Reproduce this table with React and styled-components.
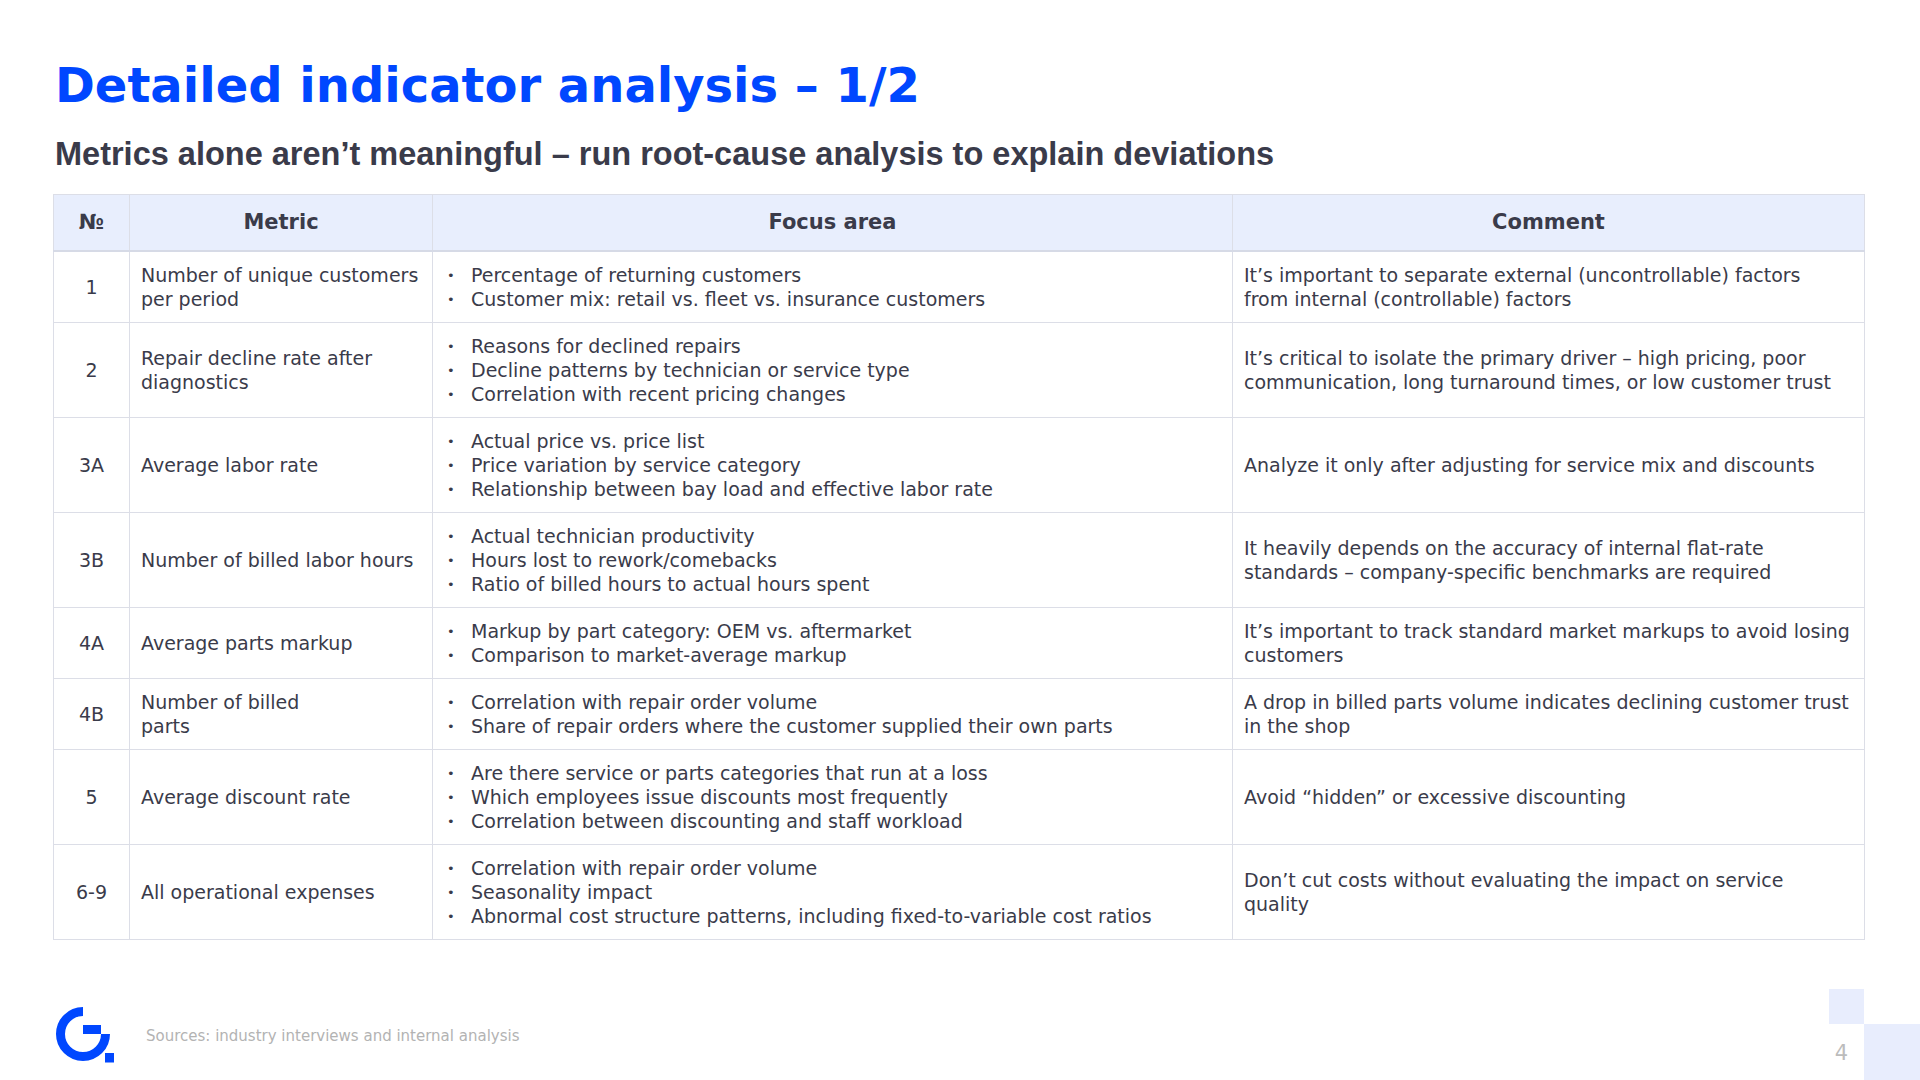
import React from 'react'
import styled, { createGlobalStyle } from 'styled-components'

const GlobalStyle = createGlobalStyle`
  html, body {
    margin: 0;
    padding: 0;
    background: #ffffff;
  }
  body {
    font-family: "DejaVu Sans", "Liberation Sans", sans-serif;
    color: #3a3b4a;
  }
`

const Page = styled.div`
  position: relative;
  width: 1920px;
  height: 1080px;
  box-sizing: border-box;
  padding: 61px 56px 17px 53px;
  display: flex;
  flex-direction: column;
  overflow: hidden;
  background: #ffffff;
`

const Title = styled.h1`
  margin: 0 0 29px 2px;
  font-family: "DejaVu Sans", sans-serif;
  font-weight: 700;
  font-size: 48px;
  line-height: 1;
  color: #0047ff;
`

const Subtitle = styled.h2`
  margin: 0 0 23px 2px;
  font-family: "Liberation Sans", Arial, sans-serif;
  font-weight: 700;
  font-size: 32.5px;
  line-height: 1;
  color: #3a3b4a;
`

const Table = styled.table`
  width: 1811px;
  border-collapse: collapse;
  table-layout: fixed;
  font-size: 19px;
  line-height: 24px;
`

const HeadCell = styled.th`
  background: #e8eefd;
  border: 1px solid #dcdee7;
  border-bottom: 2px solid #d6dae6;
  padding: 15px 10px 16px;
  font-weight: 700;
  font-size: 21px;
  line-height: 24px;
  color: #3a3b4a;
  text-align: center;
`

const Cell = styled.td`
  border: 1px solid #dcdee7;
  padding: 11px ${p => (p.$center ? '4px' : '8px')} 11px ${p => (p.$center ? 4 : p.$indent || 11)}px;
  vertical-align: middle;
  text-align: ${p => (p.$center ? 'center' : 'left')};
  white-space: pre;
  color: #3a3b4a;
`

const BulletList = styled.ul`
  margin: 0;
  padding: 0;
  list-style: none;
`

const BulletItem = styled.li`
  height: 24px;
  line-height: 24px;
  white-space: nowrap;
`

const Dot = styled.span`
  display: inline-block;
  width: 24px;
  font-size: 13px;
  line-height: 0;
  vertical-align: 2px;
  color: #3a3b4a;
`

const Footer = styled.footer`
  margin-top: auto;
  display: flex;
  align-items: center;
  gap: 31px;
  padding-left: 2px;
`

const Sources = styled.span`
  font-size: 15px;
  color: #b3b3b3;
  padding-top: 2px;
`

const Corner = styled.div`
  position: absolute;
  background: #e8edfd;
  right: ${p => p.$right}px;
  bottom: ${p => p.$bottom}px;
  width: ${p => p.$size}px;
  height: ${p => p.$size}px;
`

const PageNumber = styled.span`
  position: absolute;
  right: 72px;
  bottom: 16px;
  font-size: 21px;
  line-height: 21px;
  color: #bcbcbc;
`

const rows = [
  {
    no: '1',
    metric: 'Number of unique customers\nper period',
    focus: ['Percentage of returning customers', 'Customer mix: retail vs. fleet vs. insurance customers'],
    comment: 'It’s important to separate external (uncontrollable) factors\nfrom internal (controllable) factors',
  },
  {
    no: '2',
    metric: 'Repair decline rate after\ndiagnostics',
    focus: ['Reasons for declined repairs', 'Decline patterns by technician or service type', 'Correlation with recent pricing changes'],
    comment: 'It’s critical to isolate the primary driver – high pricing, poor\ncommunication, long turnaround times, or low customer trust',
  },
  {
    no: '3A',
    metric: 'Average labor rate',
    focus: ['Actual price vs. price list', 'Price variation by service category', 'Relationship between bay load and effective labor rate'],
    comment: 'Analyze it only after adjusting for service mix and discounts',
  },
  {
    no: '3B',
    metric: 'Number of billed labor hours',
    focus: ['Actual technician productivity', 'Hours lost to rework/comebacks', 'Ratio of billed hours to actual hours spent'],
    comment: 'It heavily depends on the accuracy of internal flat-rate\nstandards – company-specific benchmarks are required',
  },
  {
    no: '4A',
    metric: 'Average parts markup',
    focus: ['Markup by part category: OEM vs. aftermarket', 'Comparison to market-average markup'],
    comment: 'It’s important to track standard market markups to avoid losing\ncustomers',
  },
  {
    no: '4B',
    metric: 'Number of billed\nparts',
    focus: ['Correlation with repair order volume', 'Share of repair orders where the customer supplied their own parts'],
    comment: 'A drop in billed parts volume indicates declining customer trust\nin the shop',
  },
  {
    no: '5',
    metric: 'Average discount rate',
    focus: ['Are there service or parts categories that run at a loss', 'Which employees issue discounts most frequently', 'Correlation between discounting and staff workload'],
    comment: 'Avoid “hidden” or excessive discounting',
  },
  {
    no: '6-9',
    metric: 'All operational expenses',
    focus: ['Correlation with repair order volume', 'Seasonality impact', 'Abnormal cost structure patterns, including fixed-to-variable cost ratios'],
    comment: 'Don’t cut costs without evaluating the impact on service\nquality',
  },
]

const Logo = () => (
  <svg width="60" height="57" viewBox="0 0 60 57" aria-label="logo">
    <path d="M28 5.5 A22.5 22.5 0 1 0 50.5 28" fill="none" stroke="#0047ff" strokeWidth="9" />
    <rect x="28" y="19" width="18" height="9" fill="#0047ff" />
    <rect x="50" y="47" width="9" height="9.5" fill="#0047ff" />
  </svg>
)

export default function App() {
  return (
    <>
      <GlobalStyle />
      <Page>
        <Title>Detailed indicator analysis – 1/2</Title>
        <Subtitle>Metrics alone aren’t meaningful – run root-cause analysis to explain deviations</Subtitle>
        <Table>
          <colgroup>
            <col style={{ width: 76 }} />
            <col style={{ width: 303 }} />
            <col style={{ width: 800 }} />
            <col style={{ width: 632 }} />
          </colgroup>
          <thead>
            <tr>
              <HeadCell>№</HeadCell>
              <HeadCell>Metric</HeadCell>
              <HeadCell>Focus area</HeadCell>
              <HeadCell>Comment</HeadCell>
            </tr>
          </thead>
          <tbody>
            {rows.map(row => (
              <tr key={row.no}>
                <Cell $center>{row.no}</Cell>
                <Cell>{row.metric}</Cell>
                <Cell $indent={14}>
                  <BulletList>
                    {row.focus.map(item => (
                      <BulletItem key={item}>
                        <Dot>•</Dot>
                        {item}
                      </BulletItem>
                    ))}
                  </BulletList>
                </Cell>
                <Cell>{row.comment}</Cell>
              </tr>
            ))}
          </tbody>
        </Table>
        <Footer>
          <Logo />
          <Sources>Sources: industry interviews and internal analysis</Sources>
        </Footer>
        <Corner $right={56} $bottom={56} $size={35} />
        <Corner $right={0} $bottom={0} $size={56} />
        <PageNumber>4</PageNumber>
      </Page>
    </>
  )
}
